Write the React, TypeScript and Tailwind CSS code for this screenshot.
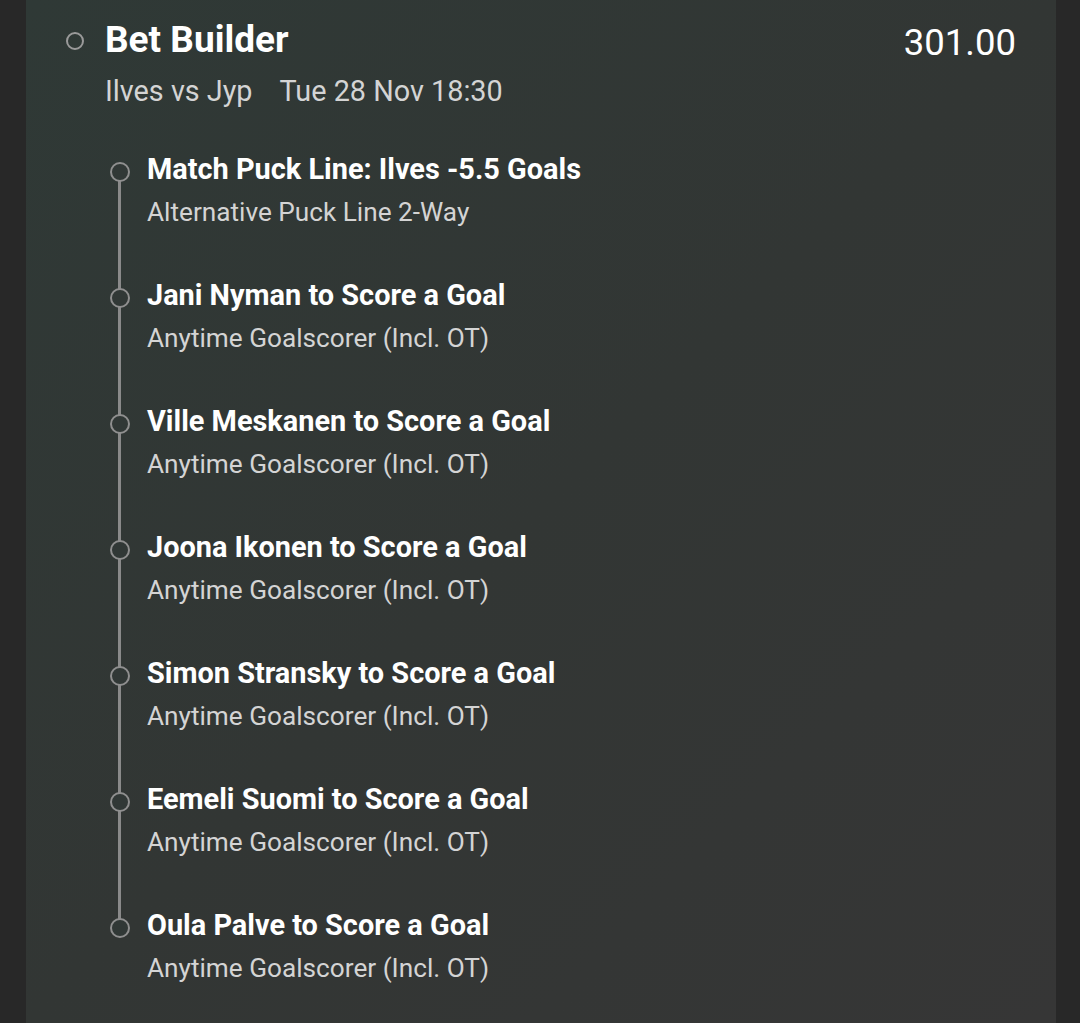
const legs = [
  { title: "Match Puck Line: Ilves -5.5 Goals", market: "Alternative Puck Line 2-Way" },
  { title: "Jani Nyman to Score a Goal", market: "Anytime Goalscorer (Incl. OT)" },
  { title: "Ville Meskanen to Score a Goal", market: "Anytime Goalscorer (Incl. OT)" },
  { title: "Joona Ikonen to Score a Goal", market: "Anytime Goalscorer (Incl. OT)" },
  { title: "Simon Stransky to Score a Goal", market: "Anytime Goalscorer (Incl. OT)" },
  { title: "Eemeli Suomi to Score a Goal", market: "Anytime Goalscorer (Incl. OT)" },
  { title: "Oula Palve to Score a Goal", market: "Anytime Goalscorer (Incl. OT)" },
];

const Leg = ({ title, market }: { title: string; market: string }) => {
  return (
    <div className="relative flex h-[126px] items-start">
      <div className="w-[121px] shrink-0 pl-[84px] pt-[13px]">
        <div className="h-[20px] w-[20px] rounded-full border-2 border-[#8f8f8f] bg-[#313836]" />
      </div>
      <div>
        <p className="text-[28.9px] font-bold leading-[40px] text-white">{title}</p>
        <p className="mt-[3px] text-[26.2px] leading-[40px] text-[#d4d4d4]">{market}</p>
      </div>
    </div>
  );
};

export default function App() {
  return (
    <div
      className="h-[1023px] w-[1080px] overflow-hidden bg-[#282828] pl-[26px] pr-[24px]"
      style={{ fontFamily: "Roboto, 'Noto Sans', sans-serif" }}
    >
      <div className="h-full bg-gradient-to-br from-[#2f3936] via-[#323634] to-[#363636]">
        <div className="flex items-start justify-between pr-[40px] pt-[18px]">
          <div className="flex items-start">
            <div className="w-[79px] shrink-0 pl-[40px] pt-[14px]">
              <div className="h-[18px] w-[18px] rounded-full border-2 border-[#9a9a9a]" />
            </div>
            <div>
              <h1 className="text-[37px] font-bold leading-[44px] text-white">Bet Builder</h1>
              <p className="mt-[9px] text-[28.8px] leading-[40px] text-[#d4d4d4]">
                Ilves vs Jyp<span className="ml-[27px]">Tue 28 Nov 18:30</span>
              </p>
            </div>
          </div>
          <p className="pt-[3px] text-[36.5px] leading-[44px] text-white">301.00</p>
        </div>
        <div className="relative mt-[38px]">
          <div className="absolute left-[92px] top-[23px] h-[756px] w-[3px] bg-[#8a8a8a]" />
          {legs.map((leg, i) => (
            <Leg key={i} title={leg.title} market={leg.market} />
          ))}
        </div>
      </div>
    </div>
  );
}
